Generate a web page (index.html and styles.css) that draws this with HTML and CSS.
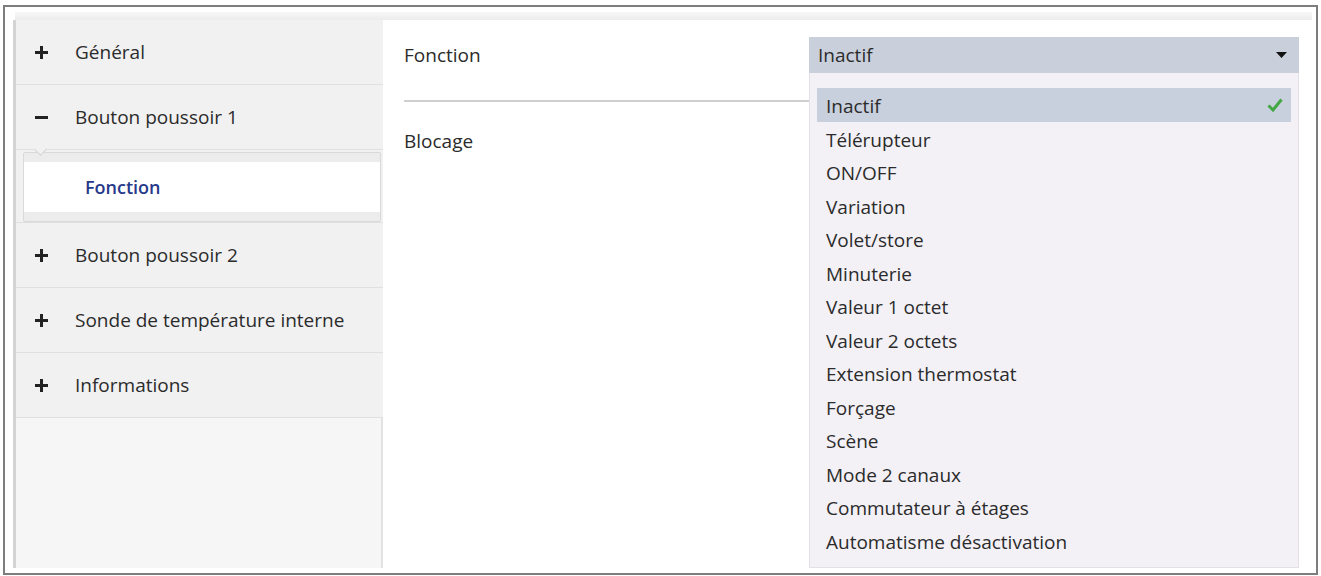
FILE: index.html
```html
<!DOCTYPE html>
<html lang="fr">
<head>
    <meta charset="UTF-8">
    <meta name="viewport" content="width=device-width, initial-scale=1.0">
    <title>Paramètres - Bouton poussoir 1</title>
    <link rel="stylesheet" href="styles.css">
</head>
<body>
    <div class="window">
        <div class="window-body">
            <div class="top-strip"></div>

            <div class="panes">
                <nav class="sidebar">
                    <div class="nav-row">
                        <svg class="nav-toggle" viewBox="0 0 13 13"><rect x="5" y="0" width="3" height="13"/><rect x="0" y="5" width="13" height="3"/></svg>
                        <span>Général</span>
                    </div>
                    <div class="nav-row open">
                        <svg class="nav-toggle" viewBox="0 0 13 13"><rect x="0" y="5" width="13" height="3"/></svg>
                        <span>Bouton poussoir 1</span>
                    </div>
                    <div class="subnav">
                        <div class="subnav-frame">
                            <div class="subnav-item">Fonction</div>
                        </div>
                    </div>
                    <div class="nav-row">
                        <svg class="nav-toggle" viewBox="0 0 13 13"><rect x="5" y="0" width="3" height="13"/><rect x="0" y="5" width="13" height="3"/></svg>
                        <span>Bouton poussoir 2</span>
                    </div>
                    <div class="nav-row">
                        <svg class="nav-toggle" viewBox="0 0 13 13"><rect x="5" y="0" width="3" height="13"/><rect x="0" y="5" width="13" height="3"/></svg>
                        <span>Sonde de température interne</span>
                    </div>
                    <div class="nav-row">
                        <svg class="nav-toggle" viewBox="0 0 13 13"><rect x="5" y="0" width="3" height="13"/><rect x="0" y="5" width="13" height="3"/></svg>
                        <span>Informations</span>
                    </div>
                    <div class="sidebar-fill"></div>
                </nav>

                <main class="content">
                    <div class="param-row">
                        <div class="param-label">Fonction</div>
                        <div class="select">
                            <div class="select-value">
                                <span>Inactif</span>
                                <svg class="caret" viewBox="0 0 11 6"><polygon points="0,0 11,0 5.5,6"/></svg>
                            </div>
                            <ul class="select-list">
                                <li class="selected">Inactif
                                    <svg class="check" viewBox="0 0 16 14"><path d="M1.5 7.5 L6 12 L14.5 1.5"/></svg>
                                </li>
                                <li>Télérupteur</li>
                                <li>ON/OFF</li>
                                <li>Variation</li>
                                <li>Volet/store</li>
                                <li>Minuterie</li>
                                <li>Valeur 1 octet</li>
                                <li>Valeur 2 octets</li>
                                <li>Extension thermostat</li>
                                <li>Forçage</li>
                                <li>Scène</li>
                                <li>Mode 2 canaux</li>
                                <li>Commutateur à étages</li>
                                <li>Automatisme désactivation</li>
                            </ul>
                        </div>
                    </div>
                    <div class="param-divider"></div>
                    <div class="param-row">
                        <div class="param-label">Blocage</div>
                    </div>
                </main>
            </div>
        </div>
    </div>
</body>
</html>
```

FILE: styles.css
```css
:root {
    --frame-color: #7d7d7d;
    --nav-bg: #f1f1f1;
    --nav-line: #e0e0e0;
    --select-bg: #c9d0dc;
    --list-bg: #f3f1f6;
    --text-color: #2b2b2b;
    --active-color: #27398a;
}

* {
    box-sizing: border-box;
    margin: 0;
    padding: 0;
}

body {
    font-family: "Open Sans", "Noto Sans", sans-serif;
    font-size: 19px;
    color: var(--text-color);
    background-color: #ffffff;
}

.window {
    height: 570px;
    margin: 5px 3px 0 3px;
    border: 2px solid var(--frame-color);
    background-color: #ffffff;
}

.window-body {
    height: 100%;
    display: flex;
    flex-direction: column;
    padding: 5px 4px 5px 8px;
}

.top-strip {
    height: 8px;
    margin-left: 2px;
    background: linear-gradient(#f7f7f7, #ececec);
}

.panes {
    flex: 1;
    display: flex;
    min-height: 0;
}

/* arbre de navigation */
.sidebar {
    width: 370px;
    display: flex;
    flex-direction: column;
    border-left: 3px solid #d4d4d4;
    background-color: var(--nav-bg);
}

.nav-row {
    position: relative;
    height: 65px;
    display: flex;
    align-items: center;
    padding-left: 19px;
    border-bottom: 1px solid var(--nav-line);
    background-color: var(--nav-bg);
}

.nav-toggle {
    width: 13px;
    height: 13px;
    margin-right: 27px;
    fill: #222;
    flex-shrink: 0;
}

.nav-row.open::after {
    content: "";
    position: absolute;
    left: 20px;
    bottom: -5px;
    width: 8px;
    height: 8px;
    background-color: var(--nav-bg);
    border-right: 1px solid #d2d2d2;
    border-bottom: 1px solid #d2d2d2;
    transform: rotate(45deg);
    z-index: 2;
}

.subnav {
    padding: 2px 2px 0 7px;
    border-bottom: 1px solid var(--nav-line);
    background-color: var(--nav-bg);
}

.subnav-frame {
    padding: 9px 0;
    border: 1px solid #d9d9d9;
    border-radius: 2px;
    background-color: #ececec;
}

.subnav-item {
    height: 50px;
    display: flex;
    align-items: center;
    padding-left: 61px;
    background-color: #ffffff;
    color: var(--active-color);
    font-size: 18px;
    font-weight: 600;
}

.sidebar-fill {
    flex: 1;
    background-color: #f6f6f6;
    border-right: 2px solid #e2e2e2;
}

/* panneau des paramètres */
.content {
    flex: 1;
    padding: 17px 13px 0 21px;
    background-color: #ffffff;
}

.param-row {
    display: grid;
    grid-template-columns: 1fr 490px;
    align-items: center;
    height: 36px;
}

.param-row + .param-divider + .param-row {
    margin-top: 21px;
}

.param-divider {
    height: 2px;
    margin-top: 27px;
    margin-right: 490px;
    background-color: #cfcfcf;
}

.select {
    position: relative;
    height: 36px;
}

.select-value {
    height: 100%;
    display: flex;
    align-items: center;
    justify-content: space-between;
    padding: 0 12px 0 9px;
    background-color: var(--select-bg);
}

.caret {
    width: 11px;
    height: 6px;
    fill: #111;
}

.select-list {
    position: absolute;
    top: 100%;
    left: 0;
    right: 0;
    list-style: none;
    padding: 15px 7px 10px;
    background-color: var(--list-bg);
    border: 1px solid #e3e0e7;
    border-top: none;
    z-index: 5;
}

.select-list li {
    height: 33.5px;
    display: flex;
    align-items: center;
    justify-content: space-between;
    padding: 3px 8px 0 9px;
}

.select-list li.selected {
    background-color: #c8cfdd;
}

.check {
    width: 16px;
    height: 14px;
    margin-top: -3px;
    fill: none;
    stroke: #43a843;
    stroke-width: 3;
}
```
